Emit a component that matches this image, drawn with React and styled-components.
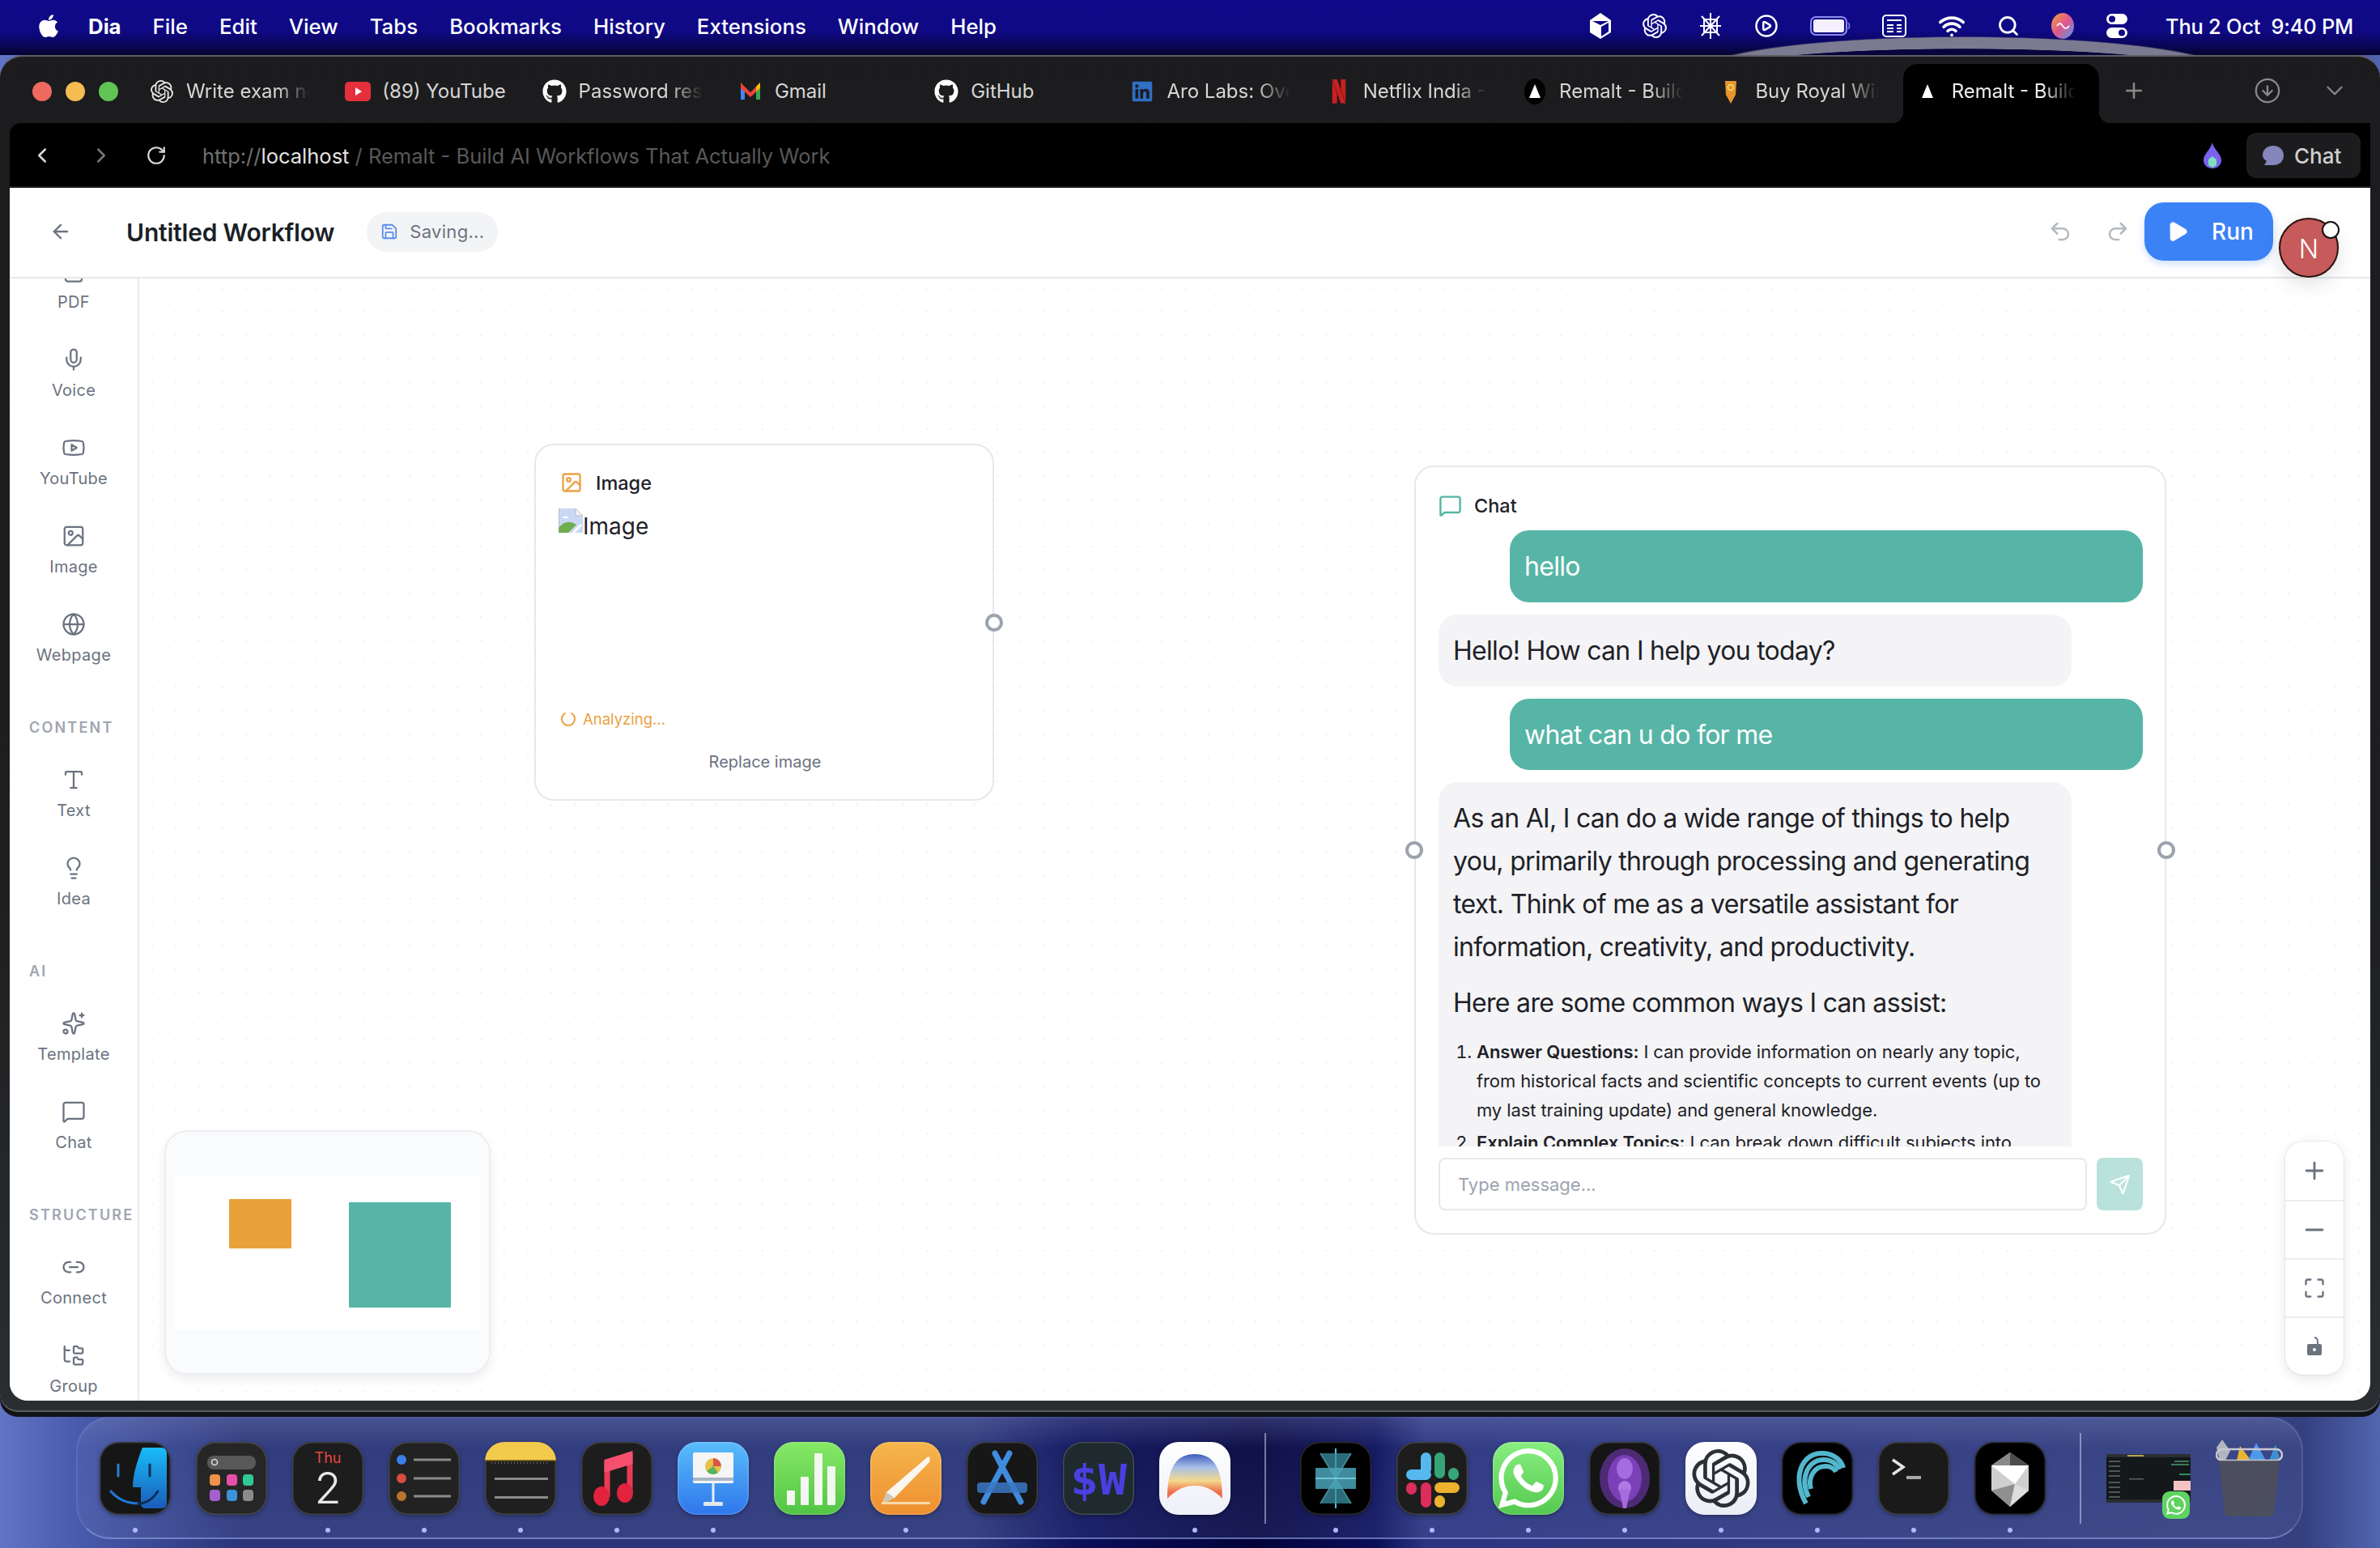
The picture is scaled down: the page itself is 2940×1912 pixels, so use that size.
import React from 'react';
import styled, { createGlobalStyle } from 'styled-components';
import {
  Mic, Youtube, Image as ImageIcon, Globe, Type, Lightbulb, Sparkles, MessageSquare, Link2, FolderTree,
  ArrowLeft, Undo2, Redo2, Play, Save, Plus, Minus, Maximize, Send, ChevronLeft, ChevronRight, RotateCw,
  ChevronDown, CircleArrowDown, FileText, Wifi, Search, CirclePlay,
} from 'lucide-react';
import { FaApple, FaGithub, FaLinkedin } from 'react-icons/fa';
import { SiOpenai, SiNetflix, SiWhatsapp } from 'react-icons/si';

const Global = createGlobalStyle`
  html, body { margin: 0; padding: 0; background: #0f0885; }
  * { box-sizing: border-box; }
  body { font-family: Inter, "Liberation Sans", sans-serif; }
`;

const Desktop = styled.div`
  width: 2940px; height: 1912px; overflow: hidden; display: flex; flex-direction: column;
  background: linear-gradient(90deg, #6274c4 0, #4a5cae 90px, #2a3578 300px, #2a3578 1200px, #0b0e58 1340px, #03033a 1550px, #0b0e58 1700px, #2b3580 1760px, #34407f 2845px, #5265b0 2940px);
`;

/* ---------- menu bar ---------- */
const MenuBar = styled.header`
  height: 68px; flex: none; display: flex; align-items: center; padding: 0 33px 4px 44px; color: #fff; font-size: 25.8px;
  background:
    radial-gradient(ellipse 309px 30px at 2425px 90px, #07053c 98%, transparent 100%),
    radial-gradient(ellipse 332px 45px at 2425px 90px, #7b7a90 97%, transparent 100%),
    linear-gradient(180deg, #100a8a 0, #0f0985 38px, #090658 56px, #05042e 68px);
`;
const MenuItems = styled.nav`
  display: flex; align-items: center; gap: 39px; margin-left: 33px;
`;
const MenuItem = styled.span`
  font-weight: ${p => (p.$bold ? 700 : 500)};
`;
const StatusIcons = styled.div`
  margin-left: auto; display: flex; align-items: center; gap: 39px;
`;
const Clock = styled.span`
  margin-left: 46px; font-size: 25.4px; font-weight: 500; white-space: pre; letter-spacing: -0.2px;
`;

/* ---------- browser window ---------- */
const BrowserWindow = styled.main`
  flex: none; height: 1674px; margin-bottom: 8px; display: flex; flex-direction: column; position: relative;
  border-top: 2px solid #5e6064; border-radius: 28px 28px 22px 22px;
  background: linear-gradient(180deg, #1c1c1e 0, #1d1e20 60%, #2a2e31 100%);
  box-shadow: 0 2px 0 #5a5c5e, 0 8px 0 #121314;
`;
const TabStrip = styled.div`
  height: 82px; flex: none; display: flex; align-items: flex-start; padding-left: 40px;
`;
const Lights = styled.div`
  display: flex; gap: 17px; width: 130px; padding-top: 31px;
`;
const Light = styled.span`
  width: 24px; height: 24px; border-radius: 50%; background: ${p => p.$c};
`;
const Tab = styled.div`
  width: 242.3px; height: 73px; margin-top: 9px; flex: none; display: flex; align-items: center; gap: 17px; padding: 0 0 6px 17px;
  color: #d6d6d6; font-size: 24px; position: relative; border-radius: 18px 18px 0 0;
  ${p => p.$active && `
    background: #000; color: #eee;
    &::before, &::after { content: ""; position: absolute; bottom: 0; width: 14px; height: 14px; }
    &::before { left: -14px; background: radial-gradient(circle at 0 0, transparent 14px, #000 14.5px); }
    &::after { right: -14px; background: radial-gradient(circle at 100% 0, transparent 14px, #000 14.5px); }
  `}
`;
const Favicon = styled.span`
  width: 26px; height: 32px; flex: none; display: flex; align-items: center; justify-content: center;
  svg { flex: none; }
`;
const TabLabel = styled.span`
  width: 156px; overflow: hidden; white-space: nowrap;
  ${p => p.$fade && `-webkit-mask-image: linear-gradient(90deg, #000 72%, transparent 98%); mask-image: linear-gradient(90deg, #000 72%, transparent 98%);`}
`;
const TabTool = styled.span`
  display: flex; align-items: center; justify-content: center; height: 84px; color: #8a8a8c; margin-left: ${p => p.$ml}px;
`;
const AddressBar = styled.div`
  height: 78px; flex: none; margin: 0 12px; background: #000; display: flex; align-items: center; padding: 2px 12px 0 25px;
  border-radius: 14px 0 0 0; font-size: 25.5px; color: #595959;
`;
const NavButton = styled.span`
  display: flex; color: ${p => p.$c || '#d8d8d8'}; width: ${p => p.$w}px;
  ${p => p.$push && 'margin-left: auto;'}
`;
const UrlText = styled.span`
  color: ${p => p.$c || 'inherit'};
`;
const Url = styled.div`
  margin-left: 24px; white-space: pre;
`;
const AskChat = styled.div`
  margin-left: 29px; width: 141px; height: 56px; border-radius: 12px; background: #1c1c1e; display: flex; align-items: center; gap: 12px; padding-left: 19px;
  color: #cfcfcf; font-size: 26px; font-weight: 500;
`;
const Content = styled.div`
  flex: none; height: 1498px; margin: 2px 12px 0; background: #fff; border-radius: 0 0 22px 22px; display: flex; flex-direction: column; position: relative; overflow: hidden;
`;

/* ---------- workflow header ---------- */
const TopBar = styled.div`
  height: 112px; flex: none; display: flex; align-items: center; padding: 0 120px 2px 49px; border-bottom: 2px solid #e5e7eb;
`;
const IconButton = styled.span`
  display: flex; color: ${p => p.$c || '#6b7280'};
`;
const Title = styled.h1`
  margin: 2px 0 0 67px; font-size: 30px; font-weight: 600; color: #1b1f27; letter-spacing: -0.2px;
`;
const SavingPill = styled.div`
  margin-left: 40px; height: 49px; width: 162px; border-radius: 24px; background: #f3f4f6; color: #6b7280; font-size: 22px; letter-spacing: .3px; display: flex; align-items: center; gap: 14px; padding-left: 17px;
`;
const TopActions = styled.div`
  margin-left: auto; display: flex; align-items: center; gap: 41px;
`;
const RunButton = styled.div`
  margin-left: -23px; width: 159px; height: 72px; border-radius: 24px; background: #3b82f6; color: #fff; font-size: 28px; font-weight: 500; display: flex; align-items: center; gap: 28px; padding-left: 27px;
  box-shadow: 0 4px 10px rgba(59, 130, 246, .25);
`;
const Avatar = styled.div`
  position: absolute; top: 37px; right: 39px; width: 74px; height: 74px; border-radius: 50%; background: #c75a5a; border: 2px solid #2a1212; box-shadow: 0 0 0 1px #e9e9e9, 0 8px 24px rgba(0,0,0,.12);
  color: #fff; font-size: 32px; font-weight: 300; display: flex; align-items: center; justify-content: center; padding-top: 3px;
  &::after { content: ""; position: absolute; top: 2px; right: -3px; width: 18px; height: 18px; border-radius: 50%; background: #fff; border: 2px solid #111; }
`;

/* ---------- body ---------- */
const Body = styled.div`
  flex: 1; min-height: 0; display: flex;
`;
const Sidebar = styled.aside`
  width: 160px; flex: none; border-right: 2px solid #e8eaee; overflow: hidden; background: #fff;
`;
const SidebarScroll = styled.div`
  margin-top: -45px;
`;
const SectionTitle = styled.div`
  padding: 42px 0 15px 24px; line-height: 26px; font-size: 18px; font-weight: 600; letter-spacing: 2.2px; color: #a0a5b0; white-space: nowrap;
`;
const ToolItem = styled.div`
  height: 109px; padding-top: 21px; display: flex; flex-direction: column; align-items: center; gap: 10px; color: #6b7280; font-size: 20px; line-height: 26px; letter-spacing: .3px;
  svg { display: block; }
`;
const Canvas = styled.section`
  flex: 1; position: relative; overflow: hidden;
  background-image: radial-gradient(circle, #eff0f2 1px, transparent 1.4px);
  background-size: 29px 29px; background-position: 1.5px -2.5px;
`;
const Node = styled.article`
  position: absolute; left: ${p => p.$x}px; top: ${p => p.$y}px; width: ${p => p.$w}px; height: ${p => p.$h}px;
  background: #fff; border: 2px solid #e7e8ec; border-radius: 24px;
`;
const Handle = styled.span`
  position: absolute; top: ${p => p.$top}px; ${p => p.$side}: -13px; width: 22px; height: 22px; border-radius: 50%; background: #fff; border: 4px solid #9ca3af;
`;
const ImageNodeBody = styled.div`
  display: flex; flex-direction: column; height: 100%; padding: 30px 30px 0 30px;
`;
const NodeHeader = styled.div`
  height: 32px; display: flex; align-items: center; gap: ${p => p.$gap}px; font-size: 23.5px; font-weight: 500; color: #1f2229;
`;
const BrokenImage = styled.div`
  margin-top: 16px; margin-left: -2px; height: 42px; display: flex; align-items: flex-start; font-size: 28px; color: #1f2229; line-height: 44px;
  svg { flex: none; }
`;
const Analyzing = styled.div`
  margin-top: auto; display: flex; align-items: center; gap: 8px; color: #eba141; font-size: 18.5px; margin-bottom: 30px;
`;
const ReplaceLink = styled.div`
  text-align: center; color: #6b7280; font-size: 20px; margin-bottom: 34px; margin-right: -2px;
`;
const ChatBody = styled.div`
  display: flex; flex-direction: column; height: 100%; padding: 31px 27px 26px 28px;
`;
const Messages = styled.div`
  height: 761px; margin-top: 15px; overflow: hidden; display: flex; flex-direction: column; gap: 15px; flex: none;
`;
const Bubble = styled.div`
  width: 782px; flex: none; padding: 19px 18px 17px; border-radius: 24px; font-size: 32px; line-height: 52.8px; letter-spacing: -0.7px;
  align-self: ${p => (p.$user ? 'flex-end' : 'flex-start')};
  background: ${p => (p.$user ? '#56b5a6' : '#f4f4f6')}; color: ${p => (p.$user ? '#fff' : '#1e2127')};
`;
const Para = styled.p`
  margin: 0 0 16px;
`;
const Steps = styled.ol`
  margin: 10px 0 0; padding-left: 29px; font-size: 22px; line-height: 36px; letter-spacing: -0.1px;
  li { margin-bottom: 4px; }
  strong { font-weight: 600; }
`;
const Composer = styled.div`
  margin-top: 14px; display: flex; gap: 12px; height: 65px; flex: none;
`;
const FakeInput = styled.div`
  flex: 1; border: 2px solid #e7e8ec; border-radius: 8px; padding-left: 22px; display: flex; align-items: center; color: #9ca3af; font-size: 22px;
`;
const SendButton = styled.div`
  width: 57px; border-radius: 8px; background: #b9e2db; color: #fff; display: flex; align-items: center; justify-content: center;
`;
const MiniMap = styled.div`
  position: absolute; left: 31px; bottom: 32px; width: 403px; height: 302px; border-radius: 28px; background: #fafbfd; border: 2px solid #eceef1; box-shadow: 0 6px 14px rgba(0,0,0,.07); padding: 55px 11px 0;
`;
const MiniSheet = styled.div`
  height: 189px; background: #fff; position: relative;
`;
const MiniNode = styled.span`
  position: absolute; left: ${p => p.$x}px; top: ${p => p.$y}px; width: ${p => p.$w}px; height: ${p => p.$h}px; background: ${p => p.$c}; border-radius: 1px;
`;
const ZoomControls = styled.div`
  position: absolute; right: 33px; bottom: 32px; width: 72px; border-radius: 22px; background: #fff; box-shadow: 0 4px 16px rgba(0,0,0,.1), 0 0 0 1px #f0f1f3; overflow: hidden;
`;
const ZoomButton = styled.div`
  height: 72px; display: flex; align-items: center; justify-content: center; color: #6b7280; border-top: ${p => (p.$first ? 0 : '2px solid #eceef1')};
`;

/* ---------- dock ---------- */
const Dock = styled.footer`
  flex: none; width: 2751px; height: 151px; margin-left: 94px; display: flex; align-items: flex-start; padding: 29px 30px 0 27px; gap: 31px; border-radius: 42px;
  background: linear-gradient(180deg, rgba(125,135,190,.36) 0, rgba(110,120,175,.12) 25%, rgba(110,120,180,.2) 100%);
  border: 2px solid rgba(120,135,215,.35); border-bottom-color: rgba(150,165,235,.5); position: relative;
`;
const DockSlot = styled.div`
  width: ${p => p.$w || 88}px; flex: none; display: flex; flex-direction: column; align-items: center; position: relative;
  margin-left: ${p => p.$ml || 0}px;
`;
const Tile = styled.div`
  width: 88px; height: 90px; border-radius: 24px; background: ${p => p.$bg}; overflow: hidden; box-shadow: inset 0 0 0 1.5px rgba(255,255,255,.16), 0 2px 5px rgba(0,0,0,.3);
  svg { display: block; }
`;
const RunDot = styled.span`
  margin-top: 16px; width: 6px; height: 6px; border-radius: 50%; background: ${p => (p.$on ? '#aeb9ff' : 'transparent')};
`;
const DockDivider = styled.span`
  width: 2px; height: 112px; margin: -11px 11px 0; background: rgba(200,205,235,.55); flex: none;
`;
const ThumbFrame = styled.div`
  margin-top: 15px; display: flex;
`;
const TrashFrame = styled.div`
  margin-top: -3px; display: flex;
`;
const MiniBadge = styled.span`
  position: absolute; right: 1px; top: 61px; width: 34px; height: 34px; border-radius: 9px; background: #5fd35f; display: flex; align-items: center; justify-content: center;
`;
const TileGlyph = styled.div`
  width: 88px; height: 90px; display: flex; align-items: center; justify-content: center;
`;

/* ---------- small artwork ---------- */
const Art = ({ children }) => <svg width="88" height="90" viewBox="0 0 88 90">{children}</svg>;

const Finder = () => (
  <Art>
    <path d="M53 7H76Q83 7 83 15V75Q83 82 76 82H57Q51 82 51 76V56H41C41 40 47 22 53 7Z" fill="url(#fb)" />
    <defs><linearGradient id="fb" x1="0" y1="0" x2="0" y2="1"><stop offset="0" stopColor="#19bdf9" /><stop offset="1" stopColor="#1b5bb8" /></linearGradient></defs>
    <path d="M23 28V42" stroke="#2a7fd0" strokeWidth="3" strokeLinecap="round" />
    <path d="M62 28V42" stroke="#0b2c58" strokeWidth="3" strokeLinecap="round" />
    <path d="M14 61Q27 76 48 76" stroke="#2278d8" strokeWidth="3" fill="none" strokeLinecap="round" />
    <path d="M48 76Q62 76 72 61" stroke="#0b2c58" strokeWidth="3" fill="none" strokeLinecap="round" />
  </Art>
);
const Launchpad = () => (
  <Art>
    <rect x="14" y="17" width="60" height="17" rx="8" fill="#585858" />
    <circle cx="23" cy="25" r="3.5" fill="none" stroke="#ddd" strokeWidth="1.6" />
    {[['#f0924a', 17], ['#e84ea8', 38], ['#2fcb94', 58]].map(([c, x]) => <rect key={c} x={x} y="40" width="13" height="14" rx="4" fill={c} />)}
    {[['#a65fd0', 17], ['#3d93d8', 38], ['#8b8b8b', 58]].map(([c, x]) => <rect key={c} x={x} y="59" width="13" height="14" rx="4" fill={c} />)}
  </Art>
);
const Calendar = () => (
  <Art>
    <text x="44" y="26" textAnchor="middle" fontFamily="Inter, sans-serif" fontSize="18" fill="#e8443f">Thu</text>
    <text x="44" y="76" textAnchor="middle" fontFamily="Inter, sans-serif" fontSize="54" fontWeight="300" fill="#e8e8e8">2</text>
  </Art>
);
const Reminders = () => (
  <Art>
    {[[22, '#3d7fe8'], [45, '#d94c3d'], [67, '#b8742c']].map(([y, c]) => (
      <g key={y}>
        <circle cx="16" cy={y} r="6" fill={c} />
        <rect x="31" y={y - 1.5} width="46" height="3" fill="#8a8a8a" />
      </g>
    ))}
  </Art>
);
const Notes = () => (
  <Art>
    <rect width="88" height="22" fill="#f2cb4c" />
    <rect y="22" width="88" height="1.5" fill="#8c7320" />
    <path d="M8 26H80" stroke="#666" strokeWidth="2" strokeDasharray="1 3" />
    <rect x="12" y="44" width="66" height="3" fill="#8b8b8b" />
    <rect x="12" y="67" width="66" height="3" fill="#8b8b8b" />
  </Art>
);
const Music = () => (
  <Art>
    <path d="M32 24V68" stroke="#ea3a56" strokeWidth="7" fill="none" />
    <path d="M60 14V63" stroke="#ea3a56" strokeWidth="7" fill="none" />
    <path d="M28.5 22L63.5 11V27L28.5 38Z" fill="#f7506e" />
    <ellipse cx="25" cy="67" rx="10" ry="12" fill="#e2233f" />
    <ellipse cx="54" cy="63" rx="10" ry="12" fill="#e2233f" />
  </Art>
);
const Keynote = () => (
  <Art>
    <rect x="19" y="13" width="50" height="38" rx="2" fill="#f5f5f5" />
    <circle cx="44" cy="30" r="10" fill="#e8c04a" />
    <path d="M44 30V20A10 10 0 0 1 54 30Z" fill="#d8564a" />
    <path d="M44 30L36 36A10 10 0 0 0 50 38Z" fill="#57b55a" />
    <rect x="19" y="44" width="50" height="4" fill="#a9b7c4" />
    <rect x="42.5" y="51" width="3" height="26" fill="#e8eef4" />
    <rect x="32" y="74" width="24" height="5" rx="1.5" fill="#dfe6ec" />
  </Art>
);
const Numbers = () => (
  <Art>
    {[[16, 60, 18], [33, 43, 35], [50, 14, 64], [66, 30, 48]].map(([x, y, h]) => <rect key={x} x={x} y={y} width="10" height={h} rx="1" fill="#f2f7ef" />)}
  </Art>
);
const Pages = () => (
  <Art>
    <path d="M68 21C73 15 75 20 73 25L30 69L15 76L20 62Z" fill="#fbf7f0" />
    <path d="M15 76L20 62L30 69Z" fill="#cfc6b8" />
    <rect x="14" y="74" width="60" height="3" fill="#f9d9a8" />
  </Art>
);
const AppStore = () => (
  <Art>
    <path d="M53 14L21 74M35 14L67 74" stroke="#3f8be0" strokeWidth="7" strokeLinecap="round" />
    <rect x="13" y="50" width="62" height="13" rx="4" fill="#3a78c4" opacity=".85" />
  </Art>
);
const DollarW = () => (
  <Art>
    <text x="9" y="65" fontFamily='"DejaVu Sans Mono", monospace' fontSize="52" fontWeight="700" fill="#4a3fe0" textLength="70" lengthAdjust="spacingAndGlyphs">$W</text>
  </Art>
);
const Dia = () => (
  <Art>
    <defs><linearGradient id="dg" x1="0" y1="0" x2="0" y2="1"><stop offset="0" stopColor="#3e5dbb" /><stop offset=".3" stopColor="#a9c0e8" /><stop offset=".6" stopColor="#f4d98a" /><stop offset=".85" stopColor="#ee6e4d" /></linearGradient></defs>
    <path d="M10 70C10 30 22 15 44 15S78 30 78 70C66 58 56 54 44 54S22 58 10 70Z" fill="url(#dg)" />
  </Art>
);
const Asterisk = () => (
  <Art>
    <path d="M44 8V82" stroke="#59c0d0" strokeWidth="2" />
    <path d="M25 14L44 45L63 14M25 76L44 45L63 76" fill="#3b8fa2" opacity=".75" stroke="#5ec6d4" strokeWidth="1.5" />
    <rect x="19" y="32" width="50" height="26" fill="#4ba3b8" opacity=".85" />
    <path d="M19 45H69" stroke="#7fdcea" strokeWidth="1.5" />
  </Art>
);
const Slack = () => (
  <Art>
    <rect x="30" y="13" width="13" height="27" rx="6.5" fill="#55b8ef" />
    <rect x="12" y="34" width="31" height="13" rx="6.5" fill="#55b8ef" />
    <rect x="47" y="13" width="13" height="32" rx="6.5" fill="#35a677" />
    <rect x="64" y="32" width="13" height="15" rx="6.5" fill="#35a677" />
    <rect x="12" y="50" width="13" height="15" rx="6.5" fill="#dc2d5b" />
    <rect x="30" y="50" width="13" height="31" rx="6.5" fill="#dc2d5b" />
    <rect x="47" y="50" width="31" height="13" rx="6.5" fill="#ecb22e" />
    <rect x="47" y="66" width="13" height="15" rx="6.5" fill="#ecb22e" />
  </Art>
);
const Podcast = () => (
  <Art>
    <ellipse cx="44" cy="45" rx="31" ry="37" fill="#4d2a74" />
    <ellipse cx="44" cy="45" rx="21" ry="29" fill="#7b3fb8" />
    <ellipse cx="44" cy="33" rx="10" ry="13" fill="#a56be0" />
    <ellipse cx="44" cy="57" rx="8" ry="9" fill="#b07ae6" />
    <path d="M37 58H51L46 82H42Z" fill="#a66bdd" />
  </Art>
);
const Wave = () => (
  <Art>
    <g fill="none" stroke="#52b7cd" strokeWidth="6">
      <path d="M30 76C12 45 24 12 52 14C66 15 74 24 76 32" />
      <path d="M33 68C22 45 32 22 52 22C62 22 69 28 71 34" />
      <path d="M36 58C32 44 40 30 54 30C60 30 65 33 67 37" />
    </g>
  </Art>
);
const Terminal = () => (
  <Art>
    <path d="M18 22L31 31L18 40" stroke="#e4e4e4" strokeWidth="3.5" fill="none" />
    <rect x="35" y="42" width="18" height="4" fill="#a8a8a8" />
  </Art>
);
const Crystal = () => (
  <Art>
    <path d="M44 13L67 29V60L44 80L21 60V29Z" fill="#cfcfcf" />
    <path d="M44 13L21 29L44 40Z" fill="#8a8a8a" />
    <path d="M44 13L67 29L44 40Z" fill="#4c4c4c" />
    <path d="M21 29L67 29L50 52Z" fill="#fff" />
    <path d="M44 80L21 60L50 52Z" fill="#8f8f8f" />
    <path d="M44 80L67 60L50 52Z" fill="#dedede" />
  </Art>
);
const ThumbWindow = () => (
  <svg width="104" height="60" viewBox="0 0 104 60">
    <rect width="104" height="60" fill="#14181a" />
    <rect width="104" height="4" fill="#2c2f32" />
    <rect x="26" y="1" width="20" height="2" fill="#b8a35a" />
    {[8, 14, 20, 26, 34, 40, 46, 52].map(y => <rect key={y} x="3" y={y} width="14" height="2" fill="#4c5a52" />)}
    <rect x="84" y="8" width="18" height="2" fill="#3e7a56" />
    <rect x="80" y="12" width="22" height="2" fill="#3e7a56" />
    <rect x="28" y="30" width="18" height="1.5" fill="#5b625e" />
    <rect x="90" y="24" width="14" height="2" fill="#2d8f5a" />
    <rect x="83" y="33" width="21" height="12" fill="#f4c4c4" />
    <rect y="56" width="104" height="4" fill="#2a2d2f" />
  </svg>
);
const Trash = () => (
  <svg width="83" height="95" viewBox="0 0 83 95">
    <path d="M8 0L18 14L12 26H5L1 10Z" fill="#c8c8c8" opacity=".85" />
    <path d="M30 8L44 26H26Z" fill="#e8b52e" />
    <path d="M50 4L62 26H40Z" fill="#4d9ae8" />
    <path d="M74 6L80 26H66Z" fill="#3f8fd0" />
    <rect x="1" y="12" width="81" height="14" rx="7" fill="none" stroke="#c9c9d2" strokeWidth="2.5" />
    <path d="M4 26L11 90Q12 95 16 95H67Q71 95 72 90L79 26Z" fill="#4f5057" opacity=".85" />
  </svg>
);

const Cube = () => (
  <svg width="26" height="32" viewBox="0 0 26 32"><path d="M13 0L26 9V24L13 32L0 24V9Z" fill="#fff" /><path d="M3 10H23L13 15Z" fill="#0f0885" /><path d="M14 17L23 12V23L14 29Z" fill="#0f0885" /></svg>
);
const Spark = () => (
  <svg width="30" height="32" viewBox="0 0 30 32" fill="none" stroke="#fff" strokeWidth="2"><path d="M15 0V32M4 4L26 28M26 4L4 28M2 16H28" /><path d="M7 8H23V24H7Z" /></svg>
);
const Battery = () => (
  <svg width="50" height="24" viewBox="0 0 50 24"><rect x="1" y="1" width="44" height="22" rx="6" fill="none" stroke="#8f8cf0" strokeWidth="2" /><rect x="4" y="4" width="38" height="16" rx="3" fill="#f4f0ff" /><path d="M47 8Q50 12 47 16" stroke="#6f6bd0" strokeWidth="2" fill="none" /></svg>
);
const KeyBox = () => (
  <svg width="30" height="28" viewBox="0 0 30 28"><rect x="1" y="1" width="28" height="26" rx="4" fill="none" stroke="#fff" strokeWidth="2" /><path d="M6 7H24M6 13H14M6 17H14M6 21H14M18 13H24M18 17H24M18 21H24" stroke="#fff" strokeWidth="2" /></svg>
);
const Ring = () => (
  <svg width="28" height="32" viewBox="0 0 28 32"><defs><linearGradient id="rg" x1="0" y1="0" x2="1" y2="1"><stop offset="0" stopColor="#f4a13c" /><stop offset=".5" stopColor="#e0578d" /><stop offset="1" stopColor="#4d9bf0" /></linearGradient></defs><ellipse cx="14" cy="16" rx="14" ry="16" fill="url(#rg)" /><path d="M7 16Q11 10 14 16T22 16Q18 22 14 16T7 16Z" fill="none" stroke="#fff" strokeWidth="1.6" /></svg>
);
const Toggles = () => (
  <svg width="28" height="32" viewBox="0 0 28 32"><rect x="1" y="1" width="26" height="13" rx="6.5" fill="#fff" /><circle cx="8" cy="7.5" r="4" fill="#0f0885" /><rect x="1" y="18" width="26" height="13" rx="6.5" fill="#fff" /><circle cx="20" cy="24.5" r="4" fill="#0f0885" /></svg>
);
const Triangle = ({ round }) => (
  <svg width="26" height="32" viewBox="0 0 26 32">{round && <ellipse cx="13" cy="16" rx="13" ry="16" fill="#000" />}<path d="M13 7L20 24H6Z" fill="#fff" /></svg>
);
const YoutubeTile = () => (
  <svg width="32" height="24" viewBox="0 0 32 24"><rect width="32" height="24" rx="5" fill="#e62f3c" /><path d="M13 7L21 12L13 17Z" fill="#fff" /></svg>
);
const GmailMark = () => (
  <svg width="26" height="32" viewBox="0 0 26 32"><path d="M1 5V26H6V13Z" fill="#4285f4" /><path d="M25 5V26H20V13Z" fill="#34a853" /><path d="M1 5L13 17L25 5V12L13 23L1 12Z" fill="#ea4335" /><path d="M20 10L25 5V12L20 16Z" fill="#fbbc04" /></svg>
);
const Shield = () => (
  <svg width="16" height="32" viewBox="0 0 16 32"><path d="M1 3H15L14 20L8 31L2 20Z" fill="#e8952f" /><circle cx="8" cy="11" r="3.5" fill="none" stroke="#f7dc6e" strokeWidth="1.6" /></svg>
);
const Flame = () => (
  <svg width="26" height="32" viewBox="0 0 26 32"><path d="M13 0C14 8 24 14 24 22C24 28 19 32 13 32S2 28 2 22C2 14 10 10 13 0Z" fill="#7a62f0" /><path d="M13 17L18 21V28L13 31L8 28V21Z" fill="#7fe0b8" /></svg>
);
const ChatBlob = () => (
  <svg width="28" height="28" viewBox="0 0 28 28"><path d="M14 2C22 2 27 7 27 14S22 26 14 26H3L6 21C3 19 1 17 1 14C1 7 6 2 14 2Z" fill="#8686bd" /></svg>
);
const BrokenPic = () => (
  <svg width="30" height="30" viewBox="0 0 30 30"><path d="M0 0H21L30 9V30H0Z" fill="#c9d8f5" /><path d="M21 0L30 9H21Z" fill="#f1f3f7" stroke="#b9bec8" /><path d="M4 12Q9 7 13 12Z" fill="#fff" /><path d="M0 30V24Q10 12 22 20L12 30Z" fill="#6fae4c" /><path d="M18 30L28 20" stroke="#fff" strokeWidth="3" /><path d="M0 0V30" stroke="#9a9ea8" strokeWidth="1" /></svg>
);
const Spinner = () => (
  <svg width="20" height="20" viewBox="0 0 20 20" fill="none" stroke="#eba141" strokeWidth="2" strokeLinecap="round"><path d="M6 3A8 8 0 1 0 14 3" /></svg>
);
const LockMark = () => (
  <svg width="20" height="24" viewBox="0 0 20 24"><path d="M10 1Q14 1 14 7V10" stroke="#6b7280" strokeWidth="2" fill="none" /><rect x="1" y="9" width="18" height="14" rx="2" fill="#6b7280" /><circle cx="10" cy="16" r="2" fill="#fff" /></svg>
);

const menus = ['File', 'Edit', 'View', 'Tabs', 'Bookmarks', 'History', 'Extensions', 'Window', 'Help'];

const tabs = [
  { label: 'Write exam notes', icon: <SiOpenai size={28} color="#e8e8e8" />, fade: true },
  { label: '(89) YouTube', icon: <YoutubeTile /> },
  { label: 'Password reset', icon: <FaGithub size={30} color="#fff" />, fade: true },
  { label: 'Gmail', icon: <GmailMark /> },
  { label: 'GitHub', icon: <FaGithub size={30} color="#fff" /> },
  { label: 'Aro Labs: Overview', icon: <FaLinkedin size={28} color="#2f6fc4" />, fade: true },
  { label: 'Netflix India - Watch', icon: <SiNetflix size={30} color="#c9201f" />, fade: true },
  { label: 'Remalt - Build AI', icon: <Triangle round />, fade: true },
  { label: 'Buy Royal Wine', icon: <Shield />, fade: true },
  { label: 'Remalt - Build AI', icon: <Triangle />, fade: true, active: true },
];

const tools = {
  source: [
    ['PDF', FileText], ['Voice', Mic], ['YouTube', Youtube], ['Image', ImageIcon], ['Webpage', Globe],
  ],
  content: [['Text', Type], ['Idea', Lightbulb]],
  ai: [['Template', Sparkles], ['Chat', MessageSquare]],
  structure: [['Connect', Link2], ['Group', FolderTree]],
};

const ToolGroup = ({ items }) => items.map(([label, Icon]) => (
  <ToolItem key={label}>
    <Icon size={30} strokeWidth={1.8} />
    {label}
  </ToolItem>
));

const dockApps = [
  [Finder, '#161616', true], [Launchpad, '#262626', false], [Calendar, '#1d1d1d', true], [Reminders, '#222', true],
  [Notes, '#1f1f1f', true], [Music, '#1d1d1d', true], [Keynote, 'linear-gradient(#59bdfb,#2e76ec)', true],
  [Numbers, 'linear-gradient(#86e866,#52c544)', false], [Pages, 'linear-gradient(#f6b64c,#ee8f30)', true],
  [AppStore, '#171717', false], [DollarW, '#1f2a2e', false], [Dia, 'linear-gradient(#fff,#eef0f8)', true],
];
const WhatsappGlyph = () => <TileGlyph><SiWhatsapp size={74} color="#fff" /></TileGlyph>;
const OpenaiGlyph = () => <TileGlyph><SiOpenai size={72} color="#2b2f36" /></TileGlyph>;
const dockPinned = [
  [Asterisk, '#000'], [Slack, '#1d1d1d'], [WhatsappGlyph, 'linear-gradient(#88ee80,#55c94f)'], [Podcast, '#151515'],
  [OpenaiGlyph, 'linear-gradient(#fff,#e9edf5)'], [Wave, '#000'], [Terminal, '#1a1a1a'], [Crystal, '#000'],
];

export default function App() {
  return (
    <Desktop>
      <Global />
      <MenuBar>
        <FaApple size={32} />
        <MenuItems>
          <MenuItem $bold>Dia</MenuItem>
          {menus.map(m => <MenuItem key={m}>{m}</MenuItem>)}
        </MenuItems>
        <StatusIcons>
          <Cube />
          <SiOpenai size={30} />
          <Spark />
          <CirclePlay size={30} strokeWidth={2} />
          <Battery />
          <KeyBox />
          <Wifi size={34} strokeWidth={2.6} />
          <Search size={28} strokeWidth={2.4} />
          <Ring />
          <Toggles />
        </StatusIcons>
        <Clock>Thu 2 Oct  9:40 PM</Clock>
      </MenuBar>

      <BrowserWindow>
        <TabStrip>
          <Lights>
            <Light $c="#ee6a5f" />
            <Light $c="#f5bd4f" />
            <Light $c="#61c454" />
          </Lights>
          {tabs.map((t, i) => (
            <Tab key={i} $active={t.active}>
              <Favicon>{t.icon}</Favicon>
              <TabLabel $fade={t.fade}>{t.label}</TabLabel>
            </Tab>
          ))}
          <TabTool $ml={28}><Plus size={30} strokeWidth={2} /></TabTool>
          <TabTool $ml={133}><CircleArrowDown size={34} strokeWidth={1.6} /></TabTool>
          <TabTool $ml={49}><ChevronDown size={34} strokeWidth={1.6} /></TabTool>
        </TabStrip>

        <AddressBar>
          <NavButton $w={73}><ChevronLeft size={30} strokeWidth={2} /></NavButton>
          <NavButton $w={70} $c="#777"><ChevronRight size={30} strokeWidth={2} /></NavButton>
          <NavButton $w={46}><RotateCw size={26} strokeWidth={2} /></NavButton>
          <Url>
            <UrlText $c="#707070">http://</UrlText>
            <UrlText $c="#e2e2e2">localhost</UrlText>
            <UrlText> / Remalt - Build AI Workflows That Actually Work</UrlText>
          </Url>
          <NavButton $w={26} $push><Flame /></NavButton>
          <AskChat><ChatBlob />Chat</AskChat>
        </AddressBar>

        <Content>
          <TopBar>
            <IconButton><ArrowLeft size={28} strokeWidth={2} /></IconButton>
            <Title>Untitled Workflow</Title>
            <SavingPill><Save size={22} color="#5b8def" strokeWidth={2} />Saving...</SavingPill>
            <TopActions>
              <IconButton $c="#b5b9c1"><Undo2 size={30} strokeWidth={2} /></IconButton>
              <IconButton $c="#b5b9c1"><Redo2 size={30} strokeWidth={2} /></IconButton>
              <RunButton><Play size={28} fill="#fff" strokeWidth={2} />Run</RunButton>
            </TopActions>
          </TopBar>
          <Avatar>N</Avatar>

          <Body>
            <Sidebar>
              <SidebarScroll>
                <ToolGroup items={tools.source} />
                <SectionTitle>CONTENT</SectionTitle>
                <ToolGroup items={tools.content} />
                <SectionTitle>AI</SectionTitle>
                <ToolGroup items={tools.ai} />
                <SectionTitle>STRUCTURE</SectionTitle>
                <ToolGroup items={tools.structure} />
              </SidebarScroll>
            </Sidebar>

            <Canvas>
              <Node $x={488} $y={204} $w={568} $h={441}>
                <ImageNodeBody>
                  <NodeHeader $gap={16}>
                    <ImageIcon size={28} color="#eba141" strokeWidth={2} />
                    Image
                  </NodeHeader>
                  <BrokenImage><BrokenPic />Image</BrokenImage>
                  <Analyzing><Spinner />Analyzing...</Analyzing>
                  <ReplaceLink>Replace image</ReplaceLink>
                </ImageNodeBody>
                <Handle $side="right" $top={208} />
              </Node>

              <Node $x={1575} $y={231} $w={929} $h={950}>
                <ChatBody>
                  <NodeHeader $gap={15}>
                    <MessageSquare size={29} color="#56b5a6" strokeWidth={2} />
                    Chat
                  </NodeHeader>
                  <Messages>
                    <Bubble $user>hello</Bubble>
                    <Bubble>Hello! How can I help you today?</Bubble>
                    <Bubble $user>what can u do for me</Bubble>
                    <Bubble>
                      <Para>As an AI, I can do a wide range of things to help you, primarily through processing and generating text. Think of me as a versatile assistant for information, creativity, and productivity.</Para>
                      <Para>Here are some common ways I can assist:</Para>
                      <Steps>
                        <li><strong>Answer Questions:</strong> I can provide information on nearly any topic, from historical facts and scientific concepts to current events (up to my last training update) and general knowledge.</li>
                        <li><strong>Explain Complex Topics:</strong> I can break down difficult subjects into simpler terms.</li>
                      </Steps>
                    </Bubble>
                  </Messages>
                  <Composer>
                    <FakeInput>Type message...</FakeInput>
                    <SendButton><Send size={26} strokeWidth={2} /></SendButton>
                  </Composer>
                </ChatBody>
                <Handle $side="left" $top={462} />
                <Handle $side="right" $top={462} />
              </Node>

              <MiniMap>
                <MiniSheet>
                  <MiniNode $x={67} $y={28} $w={77} $h={61} $c="#e9a23b" />
                  <MiniNode $x={215} $y={32} $w={126} $h={130} $c="#56b5a6" />
                </MiniSheet>
              </MiniMap>

              <ZoomControls>
                <ZoomButton $first><Plus size={34} strokeWidth={2} /></ZoomButton>
                <ZoomButton><Minus size={34} strokeWidth={2} /></ZoomButton>
                <ZoomButton><Maximize size={28} strokeWidth={2} /></ZoomButton>
                <ZoomButton><LockMark /></ZoomButton>
              </ZoomControls>
            </Canvas>
          </Body>
        </Content>
      </BrowserWindow>

      <Dock>
        {dockApps.map(([Icon, bg, on], i) => (
          <DockSlot key={i}>
            <Tile $bg={bg}><Icon /></Tile>
            <RunDot $on={on} />
          </DockSlot>
        ))}
        <DockDivider />
        {dockPinned.map(([Icon, bg], i) => (
          <DockSlot key={i}>
            <Tile $bg={bg}><Icon /></Tile>
            <RunDot $on />
          </DockSlot>
        ))}
        <DockDivider />
        <DockSlot $w={104} $ml={-11}>
          <ThumbFrame><ThumbWindow /></ThumbFrame>
          <MiniBadge><SiWhatsapp size={24} color="#fff" /></MiniBadge>
        </DockSlot>
        <DockSlot $w={83}><TrashFrame><Trash /></TrashFrame></DockSlot>
      </Dock>
    </Desktop>
  );
}
